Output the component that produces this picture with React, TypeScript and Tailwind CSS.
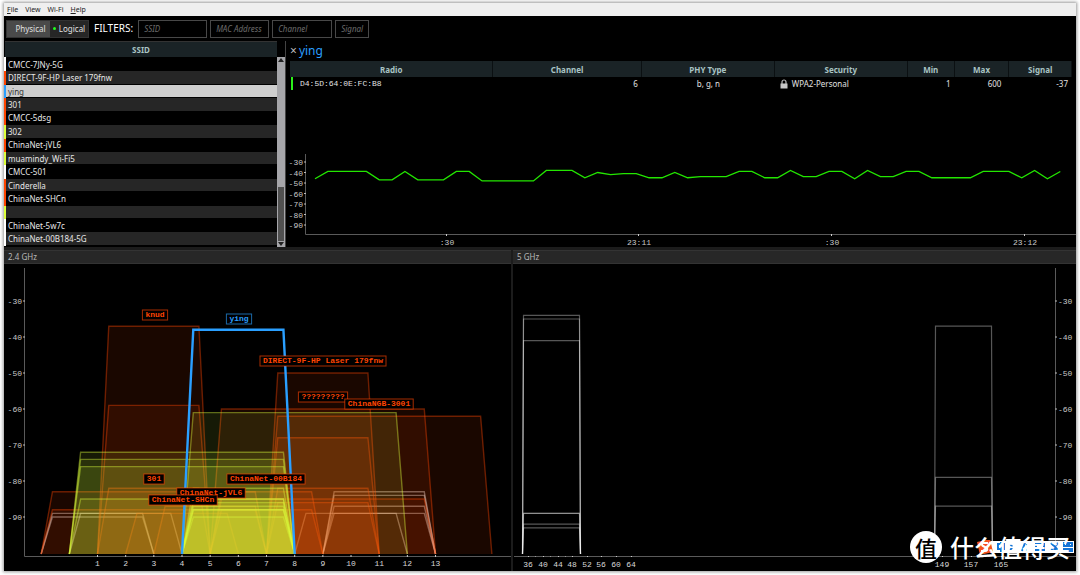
import { useState } from "react";

const ORANGE = "#ff4500";
const YELLOW = "#dcff3c";
const BLUE = "#2a9fff";
const WHITE = "#ffffff";

interface Network {
  ssid: string;
  bar: string;
}

const networks: Network[] = [
  { ssid: "CMCC-7JNy-5G", bar: "border-l-white" },
  { ssid: "DIRECT-9F-HP Laser 179fnw", bar: "border-l-[#ff4500]" },
  { ssid: "ying", bar: "border-l-[#2a9fff]" },
  { ssid: "301", bar: "border-l-[#ff4500]" },
  { ssid: "CMCC-5dsg", bar: "border-l-[#ff4500]" },
  { ssid: "302", bar: "border-l-[#dcff3c]" },
  { ssid: "ChinaNet-jVL6", bar: "border-l-[#ff4500]" },
  { ssid: "muamindy_Wi-Fi5", bar: "border-l-[#dcff3c]" },
  { ssid: "CMCC-501", bar: "border-l-white" },
  { ssid: "Cinderella", bar: "border-l-[#ff4500]" },
  { ssid: "ChinaNet-SHCn", bar: "border-l-[#ff4500]" },
  { ssid: "", bar: "border-l-[#dcff3c]" },
  { ssid: "ChinaNet-5w7c", bar: "border-l-white" },
  { ssid: "ChinaNet-00B184-5G", bar: "border-l-white" },
];

const history = [
  -46, -39, -39, -39, -39, -47, -47, -39, -47, -47, -47, -39, -39, -48, -48,
  -48, -48, -48, -38, -38, -38, -45, -40, -42, -41, -41, -45, -45, -40, -45,
  -44, -44, -44, -39, -39, -45, -45, -38, -44, -44, -39, -39, -46, -38, -44,
  -44, -39, -39, -45, -45, -45, -45, -39, -39, -39, -45, -38, -46, -39,
];

interface Signal {
  channel: number;
  half: number; // half of the base width, in channels
  dbm: number;
  color: string;
}

const signals24: Signal[] = [
  { channel: 1, half: 2, dbm: -89, color: WHITE },
  { channel: 1, half: 2, dbm: -90, color: WHITE },
  { channel: 2, half: 2, dbm: -89, color: WHITE },
  { channel: 11, half: 2, dbm: -83, color: WHITE },
  { channel: 11, half: 2, dbm: -84, color: WHITE },
  { channel: 11, half: 2, dbm: -87, color: WHITE },
  { channel: 11, half: 2, dbm: -89, color: WHITE },
  { channel: 10, half: 2, dbm: -89, color: WHITE },
  { channel: 3, half: 2, dbm: -37, color: ORANGE },
  { channel: 3, half: 2, dbm: -59, color: ORANGE },
  { channel: 9, half: 2, dbm: -50, color: ORANGE },
  { channel: 9, half: 4, dbm: -60, color: ORANGE },
  { channel: 11, half: 4, dbm: -62, color: ORANGE },
  { channel: 9, half: 2, dbm: -68, color: ORANGE },
  { channel: 3, half: 4, dbm: -83, color: ORANGE },
  { channel: 3, half: 4, dbm: -88, color: ORANGE },
  { channel: 9, half: 2, dbm: -82, color: ORANGE },
  { channel: 9, half: 4, dbm: -85, color: ORANGE },
  { channel: 9, half: 2, dbm: -86, color: ORANGE },
  { channel: 7, half: 2, dbm: -83, color: ORANGE },
  { channel: 7, half: 2, dbm: -88, color: ORANGE },
  { channel: 3, half: 2, dbm: -82, color: ORANGE },
  { channel: 4, half: 2, dbm: -89, color: ORANGE },
  { channel: 5, half: 2, dbm: -87, color: ORANGE },
  { channel: 8, half: 4, dbm: -61, color: YELLOW },
  { channel: 4, half: 4, dbm: -72, color: YELLOW },
  { channel: 4, half: 4, dbm: -74, color: YELLOW },
  { channel: 4, half: 4, dbm: -76, color: YELLOW },
  { channel: 4, half: 4, dbm: -85, color: YELLOW },
  { channel: 6, half: 2, dbm: -82, color: YELLOW },
  { channel: 6, half: 2, dbm: -85, color: YELLOW },
  { channel: 6, half: 2, dbm: -86, color: YELLOW },
  { channel: 6, half: 2, dbm: -87, color: YELLOW },
  { channel: 6, half: 2, dbm: -88, color: YELLOW },
  { channel: 6, half: 2, dbm: -88, color: YELLOW },
  { channel: 6, half: 2, dbm: -90, color: YELLOW },
];

const labels24 = [
  { x: 151, y: 51, text: "knud", color: ORANGE },
  { x: 235, y: 55, text: "ying", color: BLUE },
  { x: 319, y: 97, text: "DIRECT-9F-HP Laser 179fnw", color: ORANGE },
  { x: 319, y: 133, text: "?????????", color: ORANGE },
  { x: 375, y: 140, text: "ChinaNGB-3001", color: ORANGE },
  { x: 150, y: 215, text: "301", color: ORANGE },
  { x: 262, y: 215, text: "ChinaNet-00B184", color: ORANGE },
  { x: 207, y: 229, text: "ChinaNet-jVL6", color: ORANGE },
  { x: 179, y: 236, text: "ChinaNet-SHCn", color: ORANGE },
];

const signals5 = [
  { left: 10, right: 66, dbm: [-34, -35, -41, -89, -89, -92, -93] },
  { left: 422, right: 478, dbm: [-37, -79, -87] },
];

const levels = [-30, -40, -50, -60, -70, -80, -90];

const dbmY = (dbm: number) => 37 + (-30 - dbm) * 3.6;
const channelX = (channel: number) => 93.5 + (channel - 1) * 28.17;
const FLOOR = 290;

const outline = ({ channel, half, dbm }: Signal) => {
  const top = dbmY(dbm);
  return [
    [channelX(channel - half), FLOOR],
    [channelX(channel - half + 0.4), top],
    [channelX(channel + half - 0.4), top],
    [channelX(channel + half), FLOOR],
  ]
    .map((p) => p.join(","))
    .join(" ");
};

const MenuBar = () => (
  <nav className="flex h-[13px] items-center gap-[7px] bg-[#efefef] px-[3px] text-[7px] leading-3 text-[#222]">
    <button>
      <u>F</u>ile
    </button>
    <button>View</button>
    <button>Wi-Fi</button>
    <button>
      <u>H</u>elp
    </button>
  </nav>
);

const filters = [
  { name: "SSID", width: "w-[69px]" },
  { name: "MAC Address", width: "w-[59px]" },
  { name: "Channel", width: "w-[60px]" },
  { name: "Signal", width: "w-[34px]" },
];

const Toolbar = () => {
  const [mode, setMode] = useState("Physical");
  return (
    <div className="flex h-[25px] items-center bg-black px-0.5">
      <div className="flex h-[18px] border border-[#333] bg-[#262626] text-[8px] text-[#e0e0e0]">
        <button
          className="w-[43px] bg-[#4a4a4a] pl-1"
          onClick={() => setMode("Physical")}
          aria-pressed={mode === "Physical"}
        >
          Physical
        </button>
        <button
          className="flex w-[38px] items-center justify-center gap-[3px]"
          onClick={() => setMode("Logical")}
          aria-pressed={mode === "Logical"}
        >
          <span className="size-[3px] rounded-full bg-[#1fff1f]"></span>
          Logical
        </button>
      </div>
      <span className="px-[5px] text-[10px] text-white">FILTERS:</span>
      <div className="flex gap-[3px]">
        {filters.map((filter) => (
          <input
            key={filter.name}
            type="text"
            aria-label={filter.name}
            placeholder={filter.name}
            className={`h-[18px] border border-[#484848] bg-black pl-[5px] text-[8px] text-white italic outline-none placeholder:text-[#6c6c6c] ${filter.width}`}
          />
        ))}
      </div>
    </div>
  );
};

const NetworkList = () => {
  const [selected, setSelected] = useState("ying");
  return (
    <section className="flex border-r border-[#444] bg-black">
      <div className="flex-1">
        <table className="h-[205px] w-full border-collapse text-[8px] leading-[11px]">
          <thead>
            <tr>
              <th className="h-4 border-t border-[#333] bg-[#1a2326] p-0 font-bold text-[#a9c4c4]">
                SSID
              </th>
            </tr>
          </thead>
          <tbody>
            {networks.map((network) => (
              <tr
                key={network.ssid}
                onClick={() => setSelected(network.ssid)}
                className={
                  network.ssid === selected
                    ? "bg-[#cecece] text-[#333]"
                    : "text-[#e8e8e8] odd:bg-black even:bg-[#262626]"
                }
              >
                <td className={`border-y border-l-2 border-y-black p-0 pl-0.5 ${network.bar}`}>
                  {network.ssid || "\u00a0"}
                </td>
              </tr>
            ))}
          </tbody>
        </table>
      </div>
      <div className="flex h-[206px] w-2 flex-col pt-4">
        <div className="flex flex-1 flex-col bg-[#a6a6aa]">
          <svg viewBox="0 0 8 6" className="h-1.5 w-2">
            <path d="M4 1 7 5H1z" fill="#222" />
          </svg>
          <div className="flex-1"></div>
          <div className="mx-px h-[54px] bg-[#505050]"></div>
          <svg viewBox="0 0 8 6" className="h-1.5 w-2">
            <path d="M4 5 7 1H1z" fill="#222" />
          </svg>
        </div>
      </div>
    </section>
  );
};

const columns = [
  { name: "Radio", width: "w-[26%]" },
  { name: "Channel", width: "w-[19%]" },
  { name: "PHY Type", width: "w-[17%]" },
  { name: "Security", width: "w-[17%]" },
  { name: "Min", width: "w-[6%]" },
  { name: "Max", width: "w-[7%]" },
  { name: "Signal", width: "w-[8%]" },
];

const RadioTable = () => (
  <table className="w-full table-fixed border-separate border-spacing-0 text-[8px] leading-[13px] text-[#e0e0e0]">
    <thead>
      <tr className="bg-[#1a2326] text-[#a9c4c4]">
        {columns.map((column) => (
          <th
            key={column.name}
            className={`h-4 border-r border-[#0b1012] p-0 font-bold ${column.width}`}
          >
            {column.name}
          </th>
        ))}
      </tr>
    </thead>
    <tbody>
      <tr>
        <td className="p-0 pl-px font-['Liberation_Mono',monospace]">
          <span className="block border-l-2 border-[#2bf01a] pl-[7px]">
            D4:5D:64:0E:FC:B8
          </span>
        </td>
        <td className="p-0 pr-1 text-right">6</td>
        <td className="p-0 text-center">b, g, n</td>
        <td className="p-0">
          <span className="flex items-center gap-1 pl-[5px]">
            <svg viewBox="0 0 8 10" className="h-2.5 w-2">
              <path d="M2 5V3a2 2 0 0 1 4 0v2" fill="none" stroke="#bbb" strokeWidth="1.2" />
              <rect x="0.5" y="4.5" width="7" height="5" fill="#c8c8c8" />
            </svg>
            WPA2-Personal
          </span>
        </td>
        <td className="p-0 pr-1 text-right">1</td>
        <td className="p-0 pr-2 text-right">600</td>
        <td className="p-0 pr-1 text-right">-37</td>
      </tr>
    </tbody>
  </table>
);

const times = [
  { x: 161, text: ":30" },
  { x: 353, text: "23:11" },
  { x: 546, text: ":30" },
  { x: 739, text: "23:12" },
];

const HistoryChart = () => {
  const y = (dbm: number) => 13 + (-30 - dbm) * 1.05;
  const points = history.map((dbm, i) => `${29 + i * 12.85},${y(dbm)}`).join(" ");
  return (
    <svg
      viewBox="0 0 790 98"
      className="h-auto w-full font-['Liberation_Mono',monospace] text-[8px]"
    >
      <path d="M19.5 5V85.5H790" fill="none" stroke="#5a5a5a" />
      {levels.map((dbm) => (
        <g key={dbm}>
          <path d={`M18 ${y(dbm)}h2`} stroke="#bbb" />
          <text x="17" y={y(dbm) + 3} textAnchor="end" fill="#c8c8c8">
            {dbm}
          </text>
        </g>
      ))}
      {times.map((time) => (
        <g key={time.x}>
          <path d={`M${time.x - 0.5} 85v2`} stroke="#ccc" />
          <text x={time.x} y="96" textAnchor="middle" fill="#c8c8c8">
            {time.text}
          </text>
        </g>
      ))}
      <polyline points={points} fill="none" stroke="#23e600" strokeWidth="1.3" />
    </svg>
  );
};

const Chart24 = () => (
  <svg
    viewBox="0 0 507 307"
    className="h-auto w-full font-['Liberation_Mono',monospace] text-[8px]"
  >
    <path d="M20.5 4V292.5H507" fill="none" stroke="#5a5a5a" />
    {levels.map((dbm) => (
      <g key={dbm}>
        <path d={`M19 ${dbmY(dbm)}h2`} stroke="#bbb" />
        <text x="18" y={dbmY(dbm) + 3} textAnchor="end" fill="#c8c8c8">
          {dbm}
        </text>
      </g>
    ))}
    {Array.from({ length: 13 }, (_, i) => i + 1).map((channel) => (
      <g key={channel}>
        <path d={`M${channelX(channel)} 291v2`} stroke="#ccc" />
        <text x={channelX(channel)} y="302" textAnchor="middle" fill="#d8d8d8">
          {channel}
        </text>
      </g>
    ))}
    {signals24.map((signal, i) => (
      <polyline
        key={i}
        points={outline(signal)}
        fill={signal.color}
        fillOpacity={signal.color === WHITE ? 0 : 0.1}
        stroke={signal.color}
        strokeOpacity={0.4}
        strokeWidth="1.4"
      />
    ))}
    <polyline
      points={outline({ channel: 6, half: 2, dbm: -38, color: BLUE })}
      fill="none"
      stroke={BLUE}
      strokeWidth="2.4"
    />
    {labels24.map((label) => {
      const width = label.text.length * 4.8 + 6;
      return (
        <g key={label.text}>
          <rect
            x={label.x - width / 2}
            y={label.y - 5}
            width={width}
            height="10"
            fill="#000"
            stroke={label.color}
            strokeOpacity="0.65"
          />
          <text
            x={label.x}
            y={label.y + 2}
            textAnchor="middle"
            fill={label.color}
            className="font-bold"
          >
            {label.text}
          </text>
        </g>
      );
    })}
  </svg>
);

const ticks5 = [
  { x: 15, text: "36" },
  { x: 30, text: "40" },
  { x: 45, text: "44" },
  { x: 59, text: "48" },
  { x: 74, text: "52" },
  { x: 88, text: "56" },
  { x: 103, text: "60" },
  { x: 118, text: "64" },
  { x: 429, text: "149" },
  { x: 458, text: "157" },
  { x: 488, text: "165" },
];

const Chart5 = () => (
  <svg
    viewBox="0 0 563 307"
    className="h-auto w-full font-['Liberation_Mono',monospace] text-[8px]"
  >
    <path d="M1 292.5H563M542.5 4V292" fill="none" stroke="#5a5a5a" />
    {levels.map((dbm) => (
      <g key={dbm}>
        <path d={`M542 ${dbmY(dbm)}h2`} stroke="#bbb" />
        <text x="545" y={dbmY(dbm) + 3} fill="#c8c8c8">
          {dbm}
        </text>
      </g>
    ))}
    {ticks5.map((tick) => (
      <g key={tick.text}>
        <path d={`M${tick.x} 292.5h1`} stroke="#ccc" />
        <text x={tick.x} y="303" textAnchor="middle" fill="#d8d8d8">
          {tick.text}
        </text>
      </g>
    ))}
    <path d="M22 292.5h1M37 292.5h1M52 292.5h1" stroke="#999" />
    {signals5.map(({ left, right, dbm }) =>
      dbm.map((level, i) => (
        <path
          key={`${left}-${i}`}
          d={`M${left - 0.5} ${FLOOR}L${left + 0.5} ${dbmY(level)}H${right + 0.5}L${right + 1.5} ${FLOOR}`}
          fill="none"
          stroke="#fff"
          strokeOpacity="0.34"
          strokeWidth="1.2"
        />
      ))
    )}
  </svg>
);

const Watermark = () => (
  <div className="absolute right-[6px] bottom-2 flex items-center gap-2 font-['Noto_Sans_CJK_SC',sans-serif] text-white">
    <div className="absolute right-[-4px] flex h-3 w-[98px] items-center">
      <svg viewBox="0 0 98 14" className="h-3.5 w-full shrink-0">
        <rect x="14" y="1" width="84" height="12" fill="#fff" />
        <path d="M1 2 14-1 17 12 4 15z" fill="#f4511e" />
        <path d="M12 3H7q-2 2 0 3l4 2q1 3-2 3H5" fill="none" stroke="#fff" strokeWidth="2" />
        <g fill="none" stroke="#1374d6" strokeWidth="2">
          <path d="M22 4h6v5h-6zM25 2v10M34 4q4 3 0 6M49 3l-3 8M51 4v7M60 4h8v6h-8zM62 10h5M75 3l7 7M82 3l-7 8M79 6v5" />
          <path d="M88 3h3v3h-3zM93 3h3v3h-3zM88 9h3v2h-3zM93 9h3v2h-3z" />
        </g>
      </svg>
    </div>
    <span className="relative flex size-8 items-center justify-center rounded-full bg-white text-[22px] leading-none font-medium text-black">
      值
    </span>
    <span className="relative text-[24px] leading-8 font-medium">什么值得买</span>
  </div>
);

const BandTitle = ({ children }: { children: string }) => (
  <h2 className="h-[14px] border-y border-[#333] bg-[#272727] px-1 text-[8px] leading-3 text-[#b8b8b8]">
    {children}
  </h2>
);

const App = () => {
  return (
    <div className="min-h-screen bg-white px-1 py-[3px] font-['Noto_Sans','Open_Sans',sans-serif]">
      <main className="relative bg-black shadow-[0_0_3px_1px_#999]">
        <MenuBar />
        <Toolbar />
        <div className="grid grid-cols-[282px_1fr]">
          <NetworkList />
          <section className="flex flex-col justify-between">
            <div className="px-1">
              <h1 className="flex h-5 items-center gap-0.5 text-xs leading-4 text-[#2a9fff]">
                <button className="text-xs leading-4 text-[#bbb]" aria-label="Close">
                  ×
                </button>
                ying
              </h1>
              <RadioTable />
            </div>
            <HistoryChart />
          </section>
        </div>
        <div className="grid grid-cols-[507fr_563fr] gap-0.5 bg-[#1c1c1c] pt-[3px]">
          <section className="bg-black">
            <BandTitle>2.4 GHz</BandTitle>
            <Chart24 />
          </section>
          <section className="bg-black">
            <BandTitle>5 GHz</BandTitle>
            <Chart5 />
          </section>
        </div>
        <Watermark />
      </main>
    </div>
  );
};

export default App;
